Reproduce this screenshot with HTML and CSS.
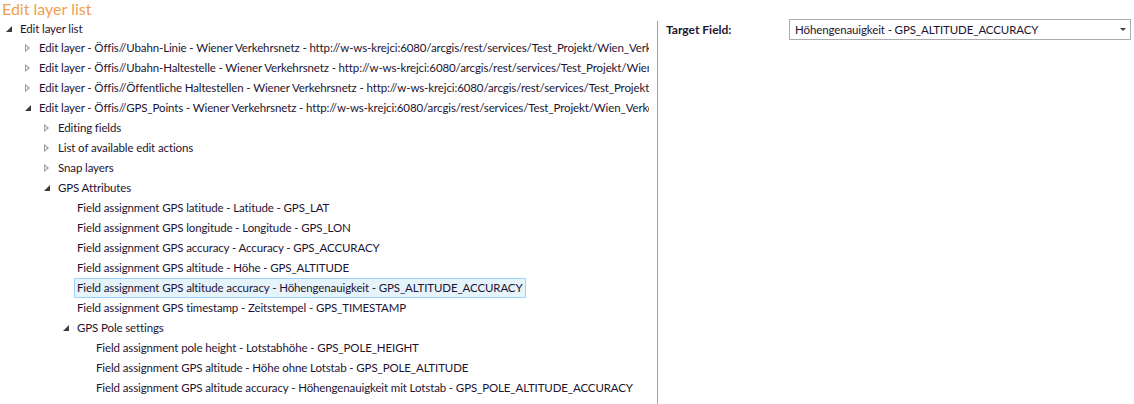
FILE: index.html
```html
<!DOCTYPE html>
<html>
<head>
<meta charset="utf-8">
<link rel="stylesheet" href="styles.css">
</head>
<body>
<div class="page">
  <div class="title">Edit layer list</div>
  <div class="main">
    <div class="tree">
      <div class="row l0"><span class="exp open"></span><span class="lbl">Edit layer list</span></div>
      <div class="row l1"><span class="exp closed"></span><span class="lbl">Edit layer - Öffis//Ubahn-Linie - Wiener Verkehrsnetz - http://w-ws-krejci:6080/arcgis/rest/services/Test_Projekt/Wien_Verkehrsnetz/MapServer/0</span></div>
      <div class="row l1"><span class="exp closed"></span><span class="lbl">Edit layer - Öffis//Ubahn-Haltestelle - Wiener Verkehrsnetz - http://w-ws-krejci:6080/arcgis/rest/services/Test_Projekt/Wien_Verkehrsnetz/MapServer/1</span></div>
      <div class="row l1"><span class="exp closed"></span><span class="lbl">Edit layer - Öffis//Öffentliche Haltestellen - Wiener Verkehrsnetz - http://w-ws-krejci:6080/arcgis/rest/services/Test_Projekt/Wien_Verkehrsnetz/MapServer/2</span></div>
      <div class="row l1"><span class="exp open"></span><span class="lbl">Edit layer - Öffis//GPS_Points - Wiener Verkehrsnetz - http://w-ws-krejci:6080/arcgis/rest/services/Test_Projekt/Wien_Verkehrsnetz/MapServer/3</span></div>
      <div class="row l2"><span class="exp closed"></span><span class="lbl">Editing fields</span></div>
      <div class="row l2"><span class="exp closed"></span><span class="lbl">List of available edit actions</span></div>
      <div class="row l2"><span class="exp closed"></span><span class="lbl">Snap layers</span></div>
      <div class="row l2"><span class="exp open"></span><span class="lbl">GPS Attributes</span></div>
      <div class="row l3"><span class="exp"></span><span class="lbl">Field assignment GPS latitude - Latitude - GPS_LAT</span></div>
      <div class="row l3"><span class="exp"></span><span class="lbl">Field assignment GPS longitude - Longitude - GPS_LON</span></div>
      <div class="row l3"><span class="exp"></span><span class="lbl">Field assignment GPS accuracy - Accuracy - GPS_ACCURACY</span></div>
      <div class="row l3"><span class="exp"></span><span class="lbl">Field assignment GPS altitude - Höhe - GPS_ALTITUDE</span></div>
      <div class="row l3"><span class="exp"></span><span class="lbl selected">Field assignment GPS altitude accuracy - Höhengenauigkeit - GPS_ALTITUDE_ACCURACY</span></div>
      <div class="row l3"><span class="exp"></span><span class="lbl">Field assignment GPS timestamp - Zeitstempel - GPS_TIMESTAMP</span></div>
      <div class="row l3"><span class="exp open"></span><span class="lbl">GPS Pole settings</span></div>
      <div class="row l4"><span class="exp"></span><span class="lbl">Field assignment pole height - Lotstabhöhe - GPS_POLE_HEIGHT</span></div>
      <div class="row l4"><span class="exp"></span><span class="lbl">Field assignment GPS altitude - Höhe ohne Lotstab - GPS_POLE_ALTITUDE</span></div>
      <div class="row l4"><span class="exp"></span><span class="lbl">Field assignment GPS altitude accuracy - Höhengenauigkeit mit Lotstab - GPS_POLE_ALTITUDE_ACCURACY</span></div>
    </div>
    <div class="divider"></div>
    <div class="props">
      <div class="prop-row">
        <div class="prop-label">Target Field:</div>
        <div class="select">
          <span class="select-text">Höhengenauigkeit - GPS_ALTITUDE_ACCURACY</span>
          <span class="select-arrow"></span>
        </div>
      </div>
    </div>
  </div>
</div>
</body>
</html>
```
FILE: styles.css
```css
html, body {
  margin: 0;
  padding: 0;
  background: #ffffff;
}
body {
  font-family: Lato, "Noto Sans", sans-serif;
  font-size: 11.5px;
  letter-spacing: -0.12px;
  color: #1e1432;
  width: 1134px;
  height: 404px;
  overflow: hidden;
}
.page {
  display: flex;
  flex-direction: column;
  height: 404px;
}
.title {
  font-size: 16px;
  letter-spacing: 0;
  line-height: 17px;
  height: 19px;
  color: #f0a04e;
  padding-left: 2px;
}
.main {
  display: flex;
  flex: 1;
  min-height: 0;
}
.tree {
  width: 649px;
  overflow: hidden;
  flex: none;
}
.row {
  display: flex;
  align-items: center;
  height: 20px;
  white-space: nowrap;
}
.row.l0 { height: 19px; }
.l0 { padding-left: 3px; }
.l1 { padding-left: 22px; }
.l2 { padding-left: 41px; }
.l3 { padding-left: 60px; }
.l4 { padding-left: 79px; }
.exp {
  width: 12px;
  height: 12px;
  flex: none;
  position: relative;
  margin-right: 2px;
}
.exp.closed::before {
  content: "";
  position: absolute;
  left: 3px;
  top: 2px;
  width: 0;
  height: 0;
  border-top: 4px solid transparent;
  border-bottom: 4px solid transparent;
  border-left: 5px solid #9a9a9a;
}
.exp.closed::after {
  content: "";
  position: absolute;
  left: 4px;
  top: 4px;
  width: 0;
  height: 0;
  border-top: 2px solid transparent;
  border-bottom: 2px solid transparent;
  border-left: 2.5px solid #ffffff;
}
.exp.open::before {
  content: "";
  position: absolute;
  left: 3px;
  top: 3px;
  width: 0;
  height: 0;
  border-bottom: 6px solid #3c3c3c;
  border-left: 6px solid transparent;
}
.lbl {
  padding: 1px 2px;
  border: 1px solid transparent;
  line-height: 16px;
}
.lbl.selected {
  border-color: #99d1ff;
  background: #e5f3fb;
}
.divider {
  width: 1px;
  background: #a0a0a0;
  margin-left: 8px;
  margin-top: 2px;
  flex: none;
}
.props {
  flex: 1;
  padding: 0 3px 0 8px;
}
.prop-row {
  display: flex;
  align-items: center;
  height: 21px;
}
.prop-label {
  width: 123px;
  font-weight: bold;
  font-size: 12px;
  letter-spacing: 0;
  flex: none;
}
.select {
  flex: 1;
  height: 19px;
  border: 1px solid #acacac;
  display: flex;
  align-items: center;
  padding-left: 5px;
}
.select-text {
  flex: 1;
  white-space: nowrap;
}
.select-arrow {
  width: 0;
  height: 0;
  border-left: 3px solid transparent;
  border-right: 3px solid transparent;
  border-top: 3px solid #404040;
  margin-right: 4px;
}
```
